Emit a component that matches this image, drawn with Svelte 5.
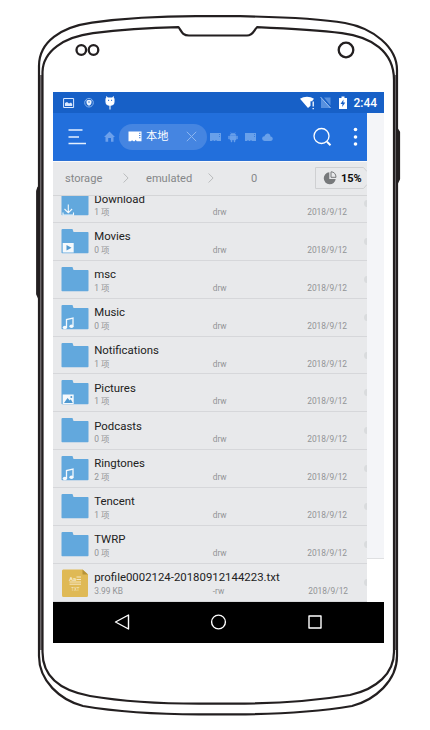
<script>
  const rows = [
    { name: 'Download', count: '1 项', badge: 'down' },
    { name: 'Movies', count: '0 项', badge: 'play' },
    { name: 'msc', count: '1 项' },
    { name: 'Music', count: '0 项', badge: 'note' },
    { name: 'Notifications', count: '1 项' },
    { name: 'Pictures', count: '1 项', badge: 'image' },
    { name: 'Podcasts', count: '0 项' },
    { name: 'Ringtones', count: '2 项', badge: 'note' },
    { name: 'Tencent', count: '1 项' },
    { name: 'TWRP', count: '0 项' },
    { name: 'profile0002124-20180912144223.txt', count: '3.99 KB', file: true }
  ];
</script>

<main class="device">
  <svg class="frame" width="430" height="730" viewBox="0 0 430 730" fill="none" stroke="#231f20" stroke-width="2.2" stroke-linejoin="round">
    <path stroke="#777375" stroke-width="2" d="M41 75V650M395.7 75V650" />
    <path d="M39 656V66C39 42 61 27 92 22.7C126 18 165 16.2 196 16.2H240C276 16.8 318 18.5 345 23C373 28 397 47 397 70V656C397 681 375 700 352 706C316 712 273 714.3 235 714.3H199C162 714.3 118 712 83 706C60 700 39 681 39 656Z" />
    <path d="M42.5 652V72C43 51 64 37 93 33.2C119 29.8 150 27.7 178.5 27.1C181.5 31 182 35.5 189 35.5H247C253 35.5 254 30 257 27.2C287 28.5 318 30.2 342 33.2C371 37 394 51 394 80V652C394 673 377 689 350 695C314 701 269 703.7 233 703.7H199C161 703.7 123 701.5 90 696C63 691 42.5 679 42.5 652Z" />
    <path d="M38.5 187L37.2 191V294L39 298M397 129L399 132V179L397 183" />
    <circle cx="81.3" cy="50" r="4.8" stroke-width="2.3" /><circle cx="93.5" cy="50" r="4.8" stroke-width="2.3" />
    <circle cx="346" cy="50" r="7.3" stroke-width="2.3" />
  </svg>

  <div class="screen">
    <div class="status">
      <svg width="60" height="21" viewBox="0 0 60 21" fill="none" stroke="#dbe9ff">
        <path d="M.6 6.5h10v9H.6z" />
        <path d="M2 14v-3l2-1 2 1.5 2-1 1.2 1.5v2z" fill="#dbe9ff" stroke="none" />
        <circle cx="26" cy="10.7" r="4.3" stroke="#87b3ed" /><path d="M23.5 8.5 26 7.8l2.5.7v2c0 1.5-1 2.5-2.5 3.3-1.5-.8-2.5-1.8-2.5-3.3z" fill="#edf5ff" stroke="none" /><path d="M26 9.3v1.5" stroke="#2468c8" />
        <path d="M43 7.5c0-1.5 1-2 2-1.5h4c1-.5 2 0 2 1.500v2.300c0 2.200-1.800 3.500-4 3.500s-4-1.300-4-3.500zM43.300 4.500l1.300 1.800M50.700 4.500l-1.300 1.800M47 13v4.500" fill="#fff" stroke="#fff" stroke-width="1.100" />
        <path d="M45 8.300h1.100M48 8.300h1.100" stroke="#1760c7" />
      </svg>
      <div class="status-right">
        <svg width="49" height="21" viewBox="0 0 49 21" fill="#fff">
          <path d="M0 6.800C4 4 10 4 14 6.800l-2 2.500h-1.500v4.500L8 16z" /><path d="M13.200 9.500v5M13.200 16v1.300" stroke="#fff" stroke-width="1.300" />
          <path d="M21 5.500 31 16H21zM24 5.500h6.500v8" fill="#5790df" /><path d="m20.500 5 10 11" stroke="#9abff0" />
          <path d="M39 6h2.500V4.500h3V6H47v11h-8z" /><path d="m43.500 7.500-3 4.500h2l-.4 3 3.200-4.500h-2z" fill="#1760c7" />
        </svg>
        <span class="time">2:44</span>
      </div>
    </div>

    <div class="body">
      <section class="app">
        <header>
          <svg class="menu" width="18" height="18" viewBox="0 0 18 18" stroke="#e4f0ff" stroke-width="1.300"><path d="M.5 2h14M.5 9H11M.5 15.500h17.500" /></svg>
          <svg class="home" width="11" height="11" viewBox="0 0 11 11" fill="#6ca0eb"><path d="M5.500.5 11 6H9.500v4.700H7V7H4.200v3.700H1.500V6H0z" /></svg>
          <div class="tab">
            <svg width="14" height="11" viewBox="0 0 14 11"><path d="M.5.5h13v9.800H8.700l-1-1.500-1 1.500H5.500L4 9.200 3 10.300H.5z" fill="#fff" /><path d="M11 2.300h1.500M11 4.500h1.500M11 6.700h1.500" stroke="#4a86dd" /></svg>
            <span>本地</span>
            <svg class="close" width="11" height="11" viewBox="0 0 11 11" stroke="#8cb6ef"><path d="m.8.8 9.400 9.400M10.200.8.8 10.200" /></svg>
          </div>
          <svg class="minis" width="63" height="12" viewBox="0 0 63 12" fill="#68a0ea">
            <path d="M0 2h11v8H7L6 9l-1 1H4L3 9l-1 1H0zM35 2h11v8h-4l-1-1-1 1h-1l-1-1-1 1h-2z" />
            <path d="M20 4.500c0-3 6-3 6 0zM20 5h6v4h-1v2h-1V9h-2v2h-1V9h-1zM18.500 5h1v3h-1zM26.500 5h1v3h-1zM20.500 1l1 2M25.500 1l-1 2" stroke="#68a0ea" stroke-width=".4" />
            <path d="M54.500 10a2.400 2.400 0 0 1 0-4.800C56 1 60.500 2 60.500 5.500c3 0 3 4.500 0 4.500z" />
            <path d="M9.500 3v3M44.500 3v3" stroke="#397fdf" stroke-dasharray="1 1" />
          </svg>
          <svg class="search" width="19" height="19" viewBox="0 0 19 19" fill="none" stroke="#fff"><circle cx="8.500" cy="9" r="7.500" stroke-width="1.300" /><path d="m14 14.700 3.500 3.500" stroke-width="2" /></svg>
          <svg class="more" width="5" height="21" viewBox="0 0 5 21" fill="#fff"><circle cx="2.500" cy="3.500" r="1.800" /><circle cx="2.500" cy="11" r="1.800" /><circle cx="2.500" cy="18" r="1.800" /></svg>
        </header>

        <nav class="crumbs">
          <span class="c1">storage</span>
          <svg width="6" height="10" viewBox="0 0 6 10"><path d="m.6.500 4.500 4.500-4.500 4.500" /></svg>
          <span class="c2">emulated</span>
          <svg width="6" height="10" viewBox="0 0 6 10"><path d="m.6.500 4.500 4.500-4.500 4.500" /></svg>
          <span class="c3">0</span>
          <div class="usage">
            <svg class="edge" width="53" height="22" viewBox="0 0 53 22"><path d="M52 4.500 48.500.5H.5v21h48l3.500-4" /></svg>
            <svg class="pie" width="14" height="14" viewBox="0 0 14 14"><path d="M6.300 1.300A6 6 0 1 0 12.700 8H6.300z" fill="#77797b" /><path d="M8 .8v5.500h5C13 3 11 .8 8 .8z" fill="none" stroke="#77797b" /></svg>
            <b>15%</b>
          </div>
        </nav>

        <div class="list">
          {#each rows as row}
            <div class="row">
              {#if row.file}
                <svg class="icon" width="28" height="29" viewBox="0 0 28 29">
                  <path d="M2 .5h19.500l5.500 5v21a1.500 1.500 0 0 1-1.500 1.500h-23A1.500 1.500 0 0 1 1 26.500v-25z" fill="#dfb955" /><path d="M21.500.5V5.500H27z" fill="#b79339" />
                  <path d="M15.500 8h4.500M15.500 10.500h4.500M8.500 13H20M8.500 15.200H20" stroke="#f5e7c4" />
                  <text x="8" y="11.500" font-size="6" font-weight="700" fill="#f5e7c4">Aa</text><text x="10.300" y="22" font-size="4.500" fill="#f5e7c4">TXT</text>
                </svg>
              {:else}
                <svg class="icon" width="28" height="29" viewBox="0 0 28 29">
                  <path d="M1.500 1h10l1 3h14.300q.7 0 .7.700v19.800q0 .8-.8.800H1.200q-.7 0-.7-.8V2q0-1 1-1z" fill="#62a8dd" />
                  {#if row.badge === 'down'}
                    <path d="M7.300 14.500v8M3.500 19l3.800 3.800 3.800-3.800M2 22.500V25h10.500v-2.500" fill="none" stroke="#f5f9fc" stroke-width="1.100" />
                  {:else if row.badge === 'play'}
                    <path d="M1.700 15h11v9.500h-11z" fill="#f5f9fc" /><path d="m5.500 17 5 2.700-5 2.800z" fill="#5099d0" />
                  {:else if row.badge === 'image'}
                    <path d="M1.700 15.500h11v9.500h-11z" fill="#f5f9fc" /><path d="m3 24 3.500-5 2.300 2.500 1-1.300 2 3.800z" fill="#5099d0" /><circle cx="10.300" cy="18" r="1" fill="#5099d0" />
                  {:else if row.badge === 'note'}
                    <path d="M5.500 23.300v-7.800l6.500-1.500v7.800" fill="none" stroke="#f5f9fc" stroke-width="1.300" /><ellipse cx="3.900" cy="23.500" rx="2.200" ry="1.800" fill="#f5f9fc" /><ellipse cx="10.500" cy="22.200" rx="2.100" ry="1.700" fill="#f5f9fc" />
                  {/if}
                </svg>
              {/if}
              <div class="info">
                <div class="name">{row.name}</div>
                <div class="meta"><span>{row.count}</span><span class="perm">{row.file ? '-rw' : 'drw'}</span><span class="date" class:last={row.file}>2018/9/12</span></div>
              </div>
              <i class="dot"></i>
            </div>
          {/each}
        </div>
      </section>
      <aside></aside>
    </div>

    <footer>
      <svg width="16" height="18" viewBox="0 0 16 18"><path d="M14.500 2v14L1.500 9z" /></svg>
      <svg width="17" height="18" viewBox="0 0 17 18"><circle cx="8.500" cy="9" r="6.900" /></svg>
      <svg width="16" height="18" viewBox="0 0 16 18"><path d="M2 3h12v12H2z" /></svg>
    </footer>
  </div>
</main>

<style>
  :global(body) { background: #fff; }
  .device { position: relative; width: 430px; height: 730px; box-sizing: border-box; padding: 92px 46px 0 53px; overflow: hidden; font-family: Roboto, "Noto Sans CJK SC", sans-serif; }
  svg { display: block; flex: none; }
  .frame { position: absolute; left: 0; top: 0; pointer-events: none; }
  .screen { width: 331px; height: 551px; display: flex; flex-direction: column; overflow: hidden; }
  .status { height: 21px; flex: none; background: #1760c7; display: flex; justify-content: space-between; padding: 0 7px 0 10px; }
  .status-right { display: flex; gap: 4.5px; color: #fff; }
  .time { font-size: 12px; font-weight: 500; line-height: 22px; width: 23.5px; white-space: nowrap; }
  .body { height: 488.5px; flex: none; display: flex; background: #fff; }
  .app { width: 314px; display: flex; flex-direction: column; overflow: hidden; background: #e8e9eb; }
  aside { flex: 1; height: 445px; background: #f4f5f8; border-bottom: 1px solid #dfe0e2; }
  header { height: 48px; flex: none; box-sizing: border-box; background: #226fdc; border-bottom: 1px solid #2a70d5; display: flex; align-items: center; padding: 0 9px 0 15px; }
  .home { margin-left: 18px; }
  .tab { width: 88px; height: 26px; box-sizing: border-box; margin-left: 3.5px; border-radius: 13px; background: #4585e1; display: flex; align-items: center; padding: 0 9.5px; color: #fff; font-size: 11.2px; }
  .tab span { margin-left: 4px; white-space: nowrap; line-height: 24px; }
  .close { margin-left: auto; }
  .minis { margin-left: 3px; }
  .search { margin-left: auto; }
  .more { margin-left: 21px; }
  .crumbs { height: 34.5px; flex: none; box-sizing: border-box; border-top: 1px solid #fafafa; border-bottom: 1px solid #d4d5d7; display: flex; align-items: center; padding-left: 12px; color: #858789; font-size: 11.1px; }
  .crumbs > svg { fill: none; stroke: #b9bbbd; stroke-width: 1; }
  .c1 { width: 58px; }
  .c2 { width: 49px; margin-left: 17px; }
  .c2 + svg { margin-left: 13px; }
  .c3 { margin-left: 37px; }
  .usage { display: flex; align-items: center; position: relative; width: 53px; height: 22px; margin-left: auto; margin-right: -1px; color: #0e0e0e; }
  .edge { position: absolute; inset: 0; fill: none; stroke: #cfd0d2; }
  .pie { margin-left: 8px; }
  b { margin-left: 4px; font-size: 11px; letter-spacing: -.1px; }
  .list { flex: 1; min-height: 0; overflow: hidden; display: flex; flex-direction: column; justify-content: flex-end; }
  .row { height: 37.85px; flex: none; box-sizing: border-box; border-bottom: 1px solid #d6d7da; display: flex; padding-left: 8.2px; position: relative; }
  .icon { margin-top: 5px; }
  .info { flex: 1; margin: 5.3px 0 0 5px; }
  .name { font-size: 11.4px; line-height: 16px; color: #222; white-space: nowrap; }
  .meta { margin-top: -.3px; height: 12px; display: flex; align-items: center; color: #929496; font-size: 8.4px; line-height: 12px; white-space: nowrap; }
  .meta > span:first-child { width: 118.5px; }
  .perm { width: 94.5px; }
  .dot { position: absolute; right: -4px; top: 15px; width: 7px; height: 7px; border-radius: 50%; background: #d9dbdd; }
  .last { margin-left: 1px; }
  footer { flex: 1; background: #000; display: flex; align-items: center; padding-left: 61px; gap: 80px; }
  footer svg { fill: none; stroke: #fff; stroke-width: 1.4; stroke-linejoin: round; }
</style>
